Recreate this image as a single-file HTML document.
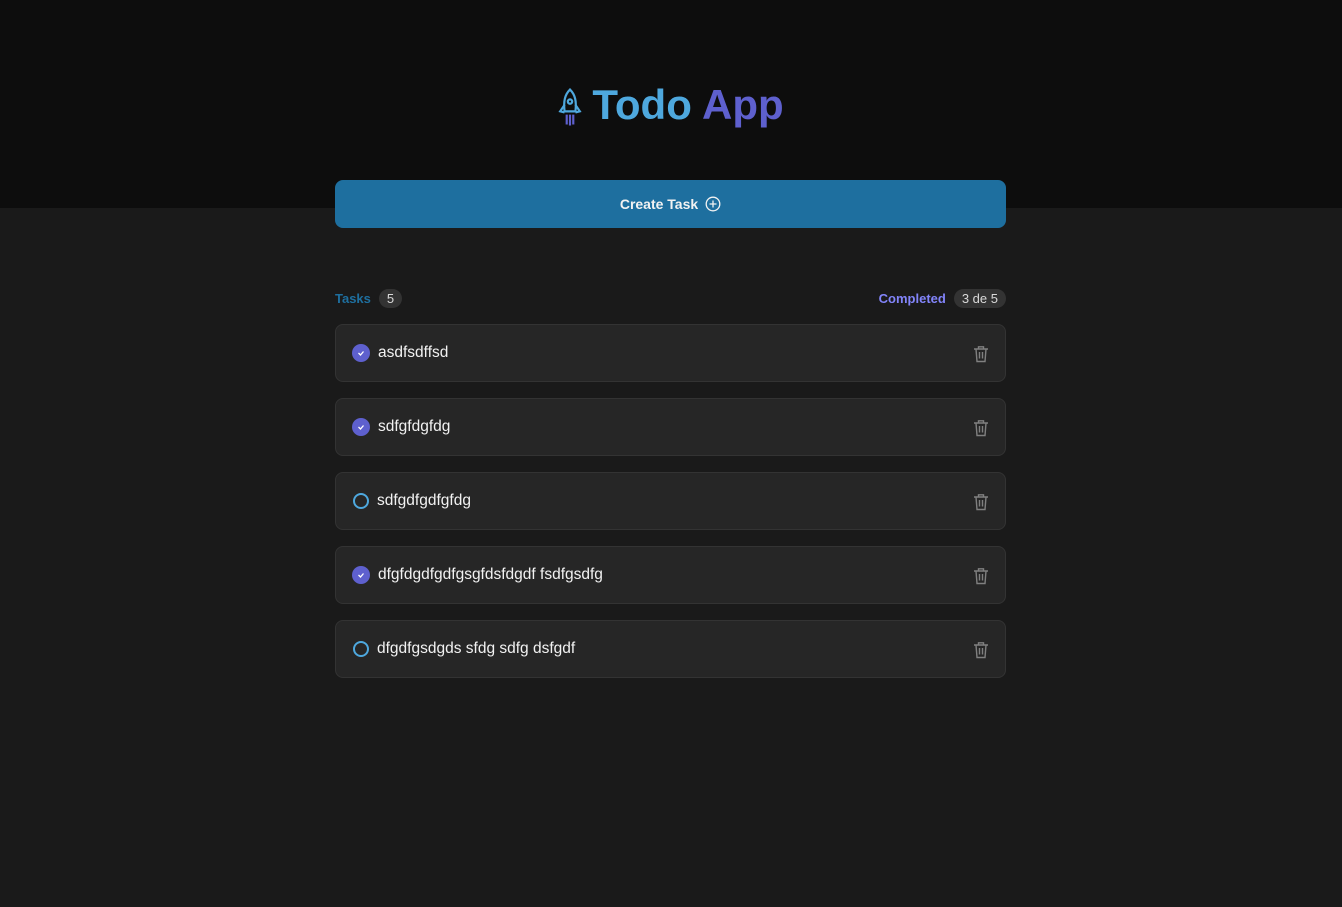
<!DOCTYPE html>
<html><head><meta charset="utf-8"><style>
*{margin:0;padding:0;box-sizing:border-box}
body{width:1342px;height:907px;background:#1a1a1a;font-family:"Liberation Sans",sans-serif;position:relative;overflow:hidden}
.hdr{position:absolute;left:0;top:0;width:1342px;height:208px;background:#0d0d0d}
.title{position:absolute;left:0;top:81px;width:1342px;text-align:center;font-size:42px;font-weight:900;letter-spacing:0}
.title svg{vertical-align:-8px;margin-right:10px}
.btn{position:absolute;left:335px;top:180px;width:671px;height:48px;background:#1e6f9f;border-radius:8px;color:#f2f2f2;font-weight:bold;font-size:14px;display:flex;align-items:center;justify-content:center;gap:7px}
.row{position:absolute;left:335px;width:671px;top:288px;height:20px;display:flex;justify-content:space-between;align-items:center;font-size:13px;font-weight:bold}
.badge{display:inline-block;background:#333;color:#d9d9d9;font-weight:normal;border-radius:10px;padding:2px 8px;margin-left:8px;font-size:13px}
.card{position:absolute;left:335px;width:671px;height:58px;background:#262626;border:1px solid #333;border-radius:8px;display:flex;align-items:center;padding:0 16px;color:#f2f2f2;font-size:15.5px}
.chk{width:18px;height:18px;border-radius:50%;background:#5e60ce;margin-right:8px;display:flex;align-items:center;justify-content:center}
.un{width:16px;height:16px;border-radius:50%;border:2px solid #4ea8de;margin:0 8px 0 1px}
.tr{position:absolute;right:16px;top:20px}
</style></head><body>
<div class="hdr"></div>
<div class="title"><svg width="24" height="40" viewBox="0 0 22 36" fill="none" stroke="#4ea8de" stroke-width="2"><path d="M11 2C6 7 5 13 6 22h10c1-9 0-15-5-20z"/><circle cx="11" cy="13" r="2"/><path d="M6 16l-4 6 4 1M16 16l4 6-4 1"/><path d="M8 25v9M11 25v10M14 25v9" stroke="#5e60ce"/></svg><span style="color:#4ea8de">Todo </span><span style="color:#5e60ce">App</span></div>
<div class="btn">Create Task <svg width="16" height="16" viewBox="0 0 16 16" fill="none" stroke="#f2f2f2" stroke-width="1.3"><circle cx="8" cy="8" r="6.8"/><path d="M8 4.5v7M4.5 8h7"/></svg></div>
<div class="row"><span style="color:#1e6f9f">Tasks<span class="badge">5</span></span><span style="color:#8284fa">Completed<span class="badge">3 de 5</span></span></div>
<div class="card" style="top:324px"><div class="chk"><svg width="10" height="10" viewBox="0 0 10 10"><path d="M2.5 5l2 2 3-3.5" stroke="#fff" stroke-width="1.3" fill="none"/></svg></div>asdfsdffsd<svg class="tr" width="16" height="18" viewBox="0 0 16 18" fill="none" stroke="#808080" stroke-width="1.4"><path d="M1 4h14M5.5 4V1.8h5V4M3 4l1 12.5h8L13 4M6.5 7v6.5M9.5 7v6.5"/></svg></div>
<div class="card" style="top:398px"><div class="chk"><svg width="10" height="10" viewBox="0 0 10 10"><path d="M2.5 5l2 2 3-3.5" stroke="#fff" stroke-width="1.3" fill="none"/></svg></div>sdfgfdgfdg<svg class="tr" width="16" height="18" viewBox="0 0 16 18" fill="none" stroke="#808080" stroke-width="1.4"><path d="M1 4h14M5.5 4V1.8h5V4M3 4l1 12.5h8L13 4M6.5 7v6.5M9.5 7v6.5"/></svg></div>
<div class="card" style="top:472px"><div class="un"></div>sdfgdfgdfgfdg<svg class="tr" width="16" height="18" viewBox="0 0 16 18" fill="none" stroke="#808080" stroke-width="1.4"><path d="M1 4h14M5.5 4V1.8h5V4M3 4l1 12.5h8L13 4M6.5 7v6.5M9.5 7v6.5"/></svg></div>
<div class="card" style="top:546px"><div class="chk"><svg width="10" height="10" viewBox="0 0 10 10"><path d="M2.5 5l2 2 3-3.5" stroke="#fff" stroke-width="1.3" fill="none"/></svg></div>dfgfdgdfgdfgsgfdsfdgdf fsdfgsdfg<svg class="tr" width="16" height="18" viewBox="0 0 16 18" fill="none" stroke="#808080" stroke-width="1.4"><path d="M1 4h14M5.5 4V1.8h5V4M3 4l1 12.5h8L13 4M6.5 7v6.5M9.5 7v6.5"/></svg></div>
<div class="card" style="top:620px"><div class="un"></div>dfgdfgsdgds sfdg sdfg dsfgdf<svg class="tr" width="16" height="18" viewBox="0 0 16 18" fill="none" stroke="#808080" stroke-width="1.4"><path d="M1 4h14M5.5 4V1.8h5V4M3 4l1 12.5h8L13 4M6.5 7v6.5M9.5 7v6.5"/></svg></div>
</body></html>
